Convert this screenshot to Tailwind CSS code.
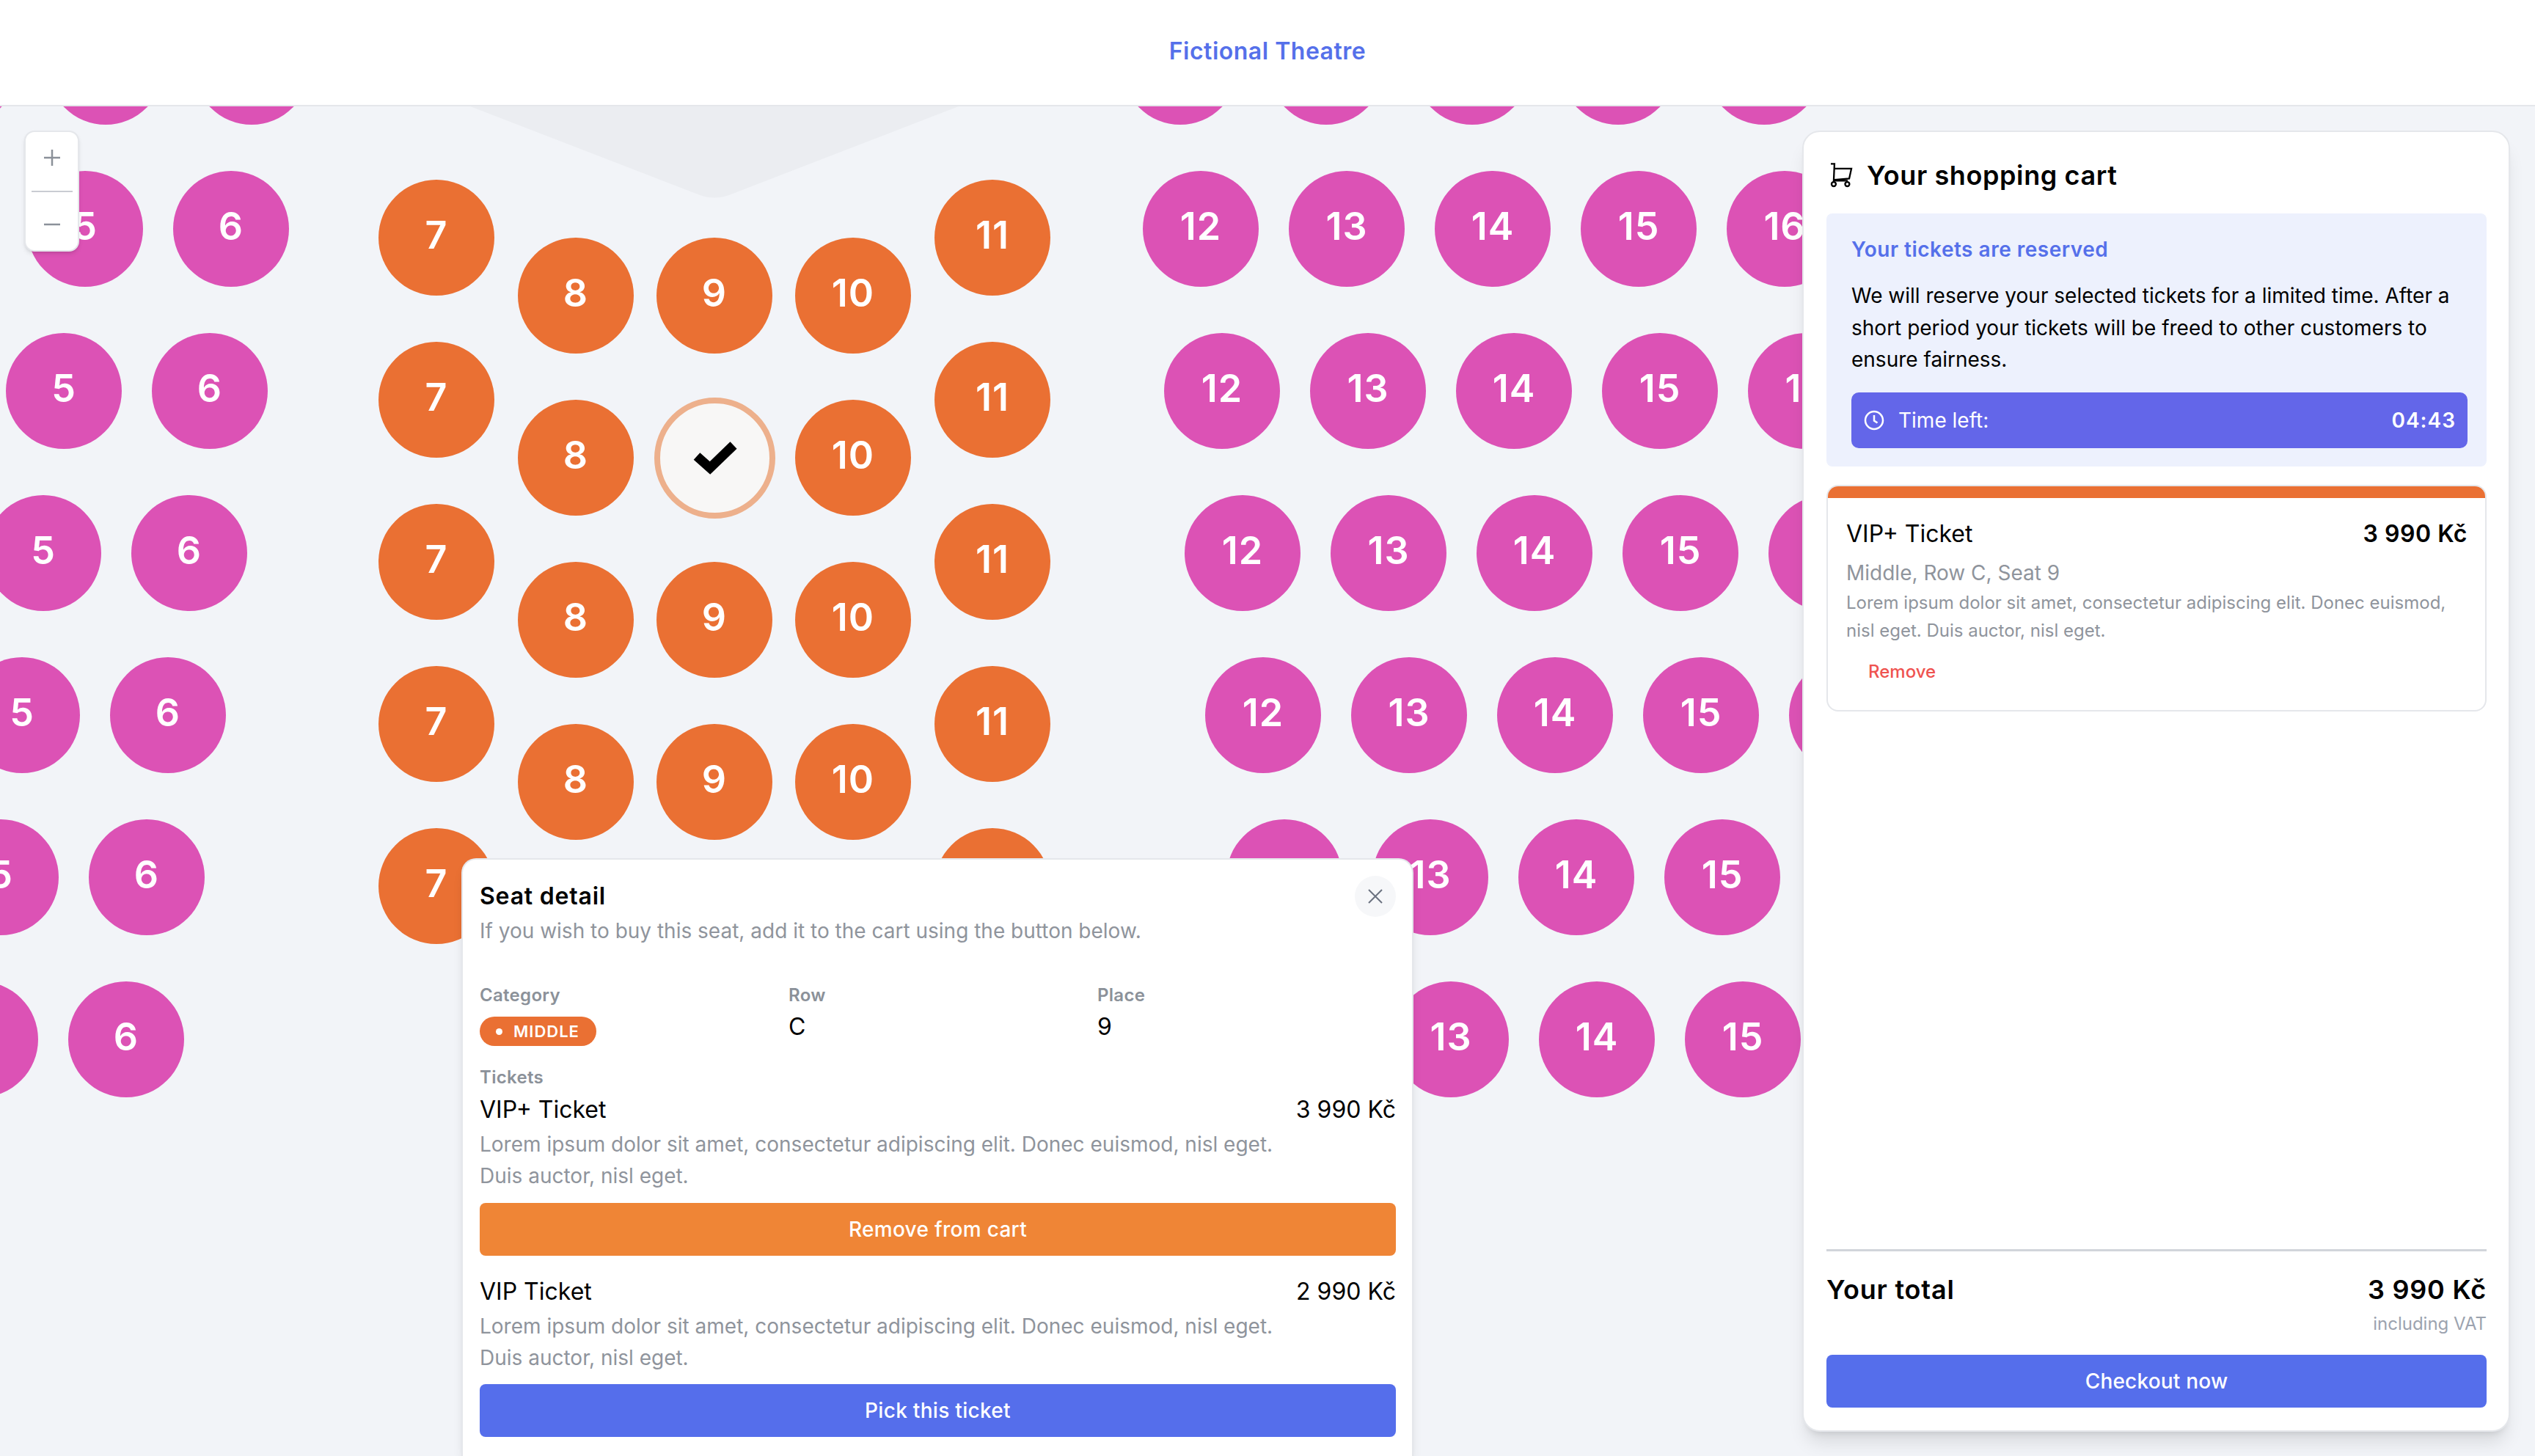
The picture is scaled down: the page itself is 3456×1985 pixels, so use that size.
<!DOCTYPE html>
<html lang="en">
  <head>
    <meta charset="UTF-8" />
    <meta name="viewport" content="width=device-width, initial-scale=1.0" />
    <script src="https://cdn.jsdelivr.net/npm/@tailwindcss/browser@4"></script>
    <title>Fictional Theatre</title>
  </head>

  <body class="bg-[#f2f4f8] h-screen w-screen overflow-hidden text-black [font-family:Inter,sans-serif]">
    <header class="relative z-20 flex h-[145px] items-center justify-center border-b-2 border-[#e5e7eb] bg-white pb-[4px]">
      <h1 class="text-[32px] font-semibold tracking-[0.5px] text-[#5570ea]">Fictional Theatre</h1>
    </header>

    <main class="relative h-[1840px] w-full overflow-hidden">
      <!-- hall map: seats are placed by script from their coordinates -->
      <div id="map" class="absolute inset-0">
        <svg class="absolute left-[641px] top-0" width="666" height="126" viewBox="0 0 666 126">
          <path d="M0 0H666L358 119Q333 130 308 119Z" fill="#ebedf1" />
        </svg>
      </div>

      <!-- zoom control -->
      <div class="absolute left-[33px] top-[33px] flex h-[165px] w-[75px] flex-col items-center rounded-[14px] border-2 border-[#e5e7eb] bg-white shadow-md">
        <div class="flex h-[81px] items-center justify-center pb-[10px]">
          <svg width="22" height="22" viewBox="0 0 22 22" fill="none" stroke="#8b9199" stroke-width="2.5"><path d="M11 0v22M0 11h22" /></svg>
        </div>
        <div class="h-[2px] w-[56px] bg-[#c9ccd2]"></div>
        <div class="flex h-[80px] items-center justify-center pt-[10px]">
          <svg width="22" height="22" viewBox="0 0 22 22" fill="none" stroke="#8b9199" stroke-width="2.5"><path d="M0 11h22" /></svg>
        </div>
      </div>

      <!-- seat detail popup -->
      <section class="absolute bottom-0 left-[629px] h-[815px] w-[1298px] rounded-t-[20px] border-2 border-b-0 border-[#e5e7eb] bg-white pl-[23px] pr-[22px] pt-[30px] shadow-lg">
        <div class="relative">
          <h2 class="text-[32px] leading-[40px] font-semibold tracking-[0.8px]">Seat detail</h2>
          <p class="mt-[7px] text-[28px] leading-[40px] text-[#8f949c]">If you wish to buy this seat, add it to the cart using the button below.</p>
          <button class="absolute -top-[8px] right-0 flex h-[56px] w-[56px] items-center justify-center rounded-full bg-[#f6f7f9]">
            <svg width="22" height="22" viewBox="0 0 22 22" fill="none" stroke="#6b7280" stroke-width="2"><path d="M2 2l18 18M20 2L2 20" /></svg>
          </button>
        </div>
        <div class="mt-[52px] grid grid-cols-[421px_421px_1fr]">
          <div>
            <p class="text-[24px] leading-[32px] font-semibold tracking-[0.3px] text-[#8b9199]">Category</p>
            <span class="mt-[13px] flex h-[40px] w-[159px] items-center gap-[15px] rounded-full bg-[#ea7033] pl-[22px] text-[22px] font-semibold tracking-[1px] text-white">
              <i class="h-[9px] w-[9px] rounded-full bg-white"></i>MIDDLE
            </span>
          </div>
          <div>
            <p class="text-[24px] leading-[32px] font-semibold tracking-[0.3px] text-[#8b9199]">Row</p>
            <p class="mt-[7px] text-[32px] leading-[40px]">C</p>
          </div>
          <div>
            <p class="text-[24px] leading-[32px] font-semibold tracking-[0.3px] text-[#8b9199]">Place</p>
            <p class="mt-[7px] text-[32px] leading-[40px]">9</p>
          </div>
        </div>
        <p class="mt-[27px] text-[24px] leading-[32px] font-semibold tracking-[0.3px] text-[#8b9199]">Tickets</p>
        <div class="mt-[8px] flex justify-between text-[32px] leading-[40px]"><span>VIP+ Ticket</span><span>3 990 Kč</span></div>
        <p class="mt-[6px] w-[1100px] text-[28px] leading-[43px] text-[#8f949c]">Lorem ipsum dolor sit amet, consectetur adipiscing elit. Donec euismod, nisl eget. Duis auctor, nisl eget.</p>
        <button class="mt-[15px] block h-[72px] w-full rounded-[8px] bg-[#ef8536] text-[28px] font-medium tracking-[0.3px] text-white">Remove from cart</button>
        <div class="mt-[29px] flex justify-between text-[32px] leading-[40px]"><span>VIP Ticket</span><span>2 990 Kč</span></div>
        <p class="mt-[6px] w-[1100px] text-[28px] leading-[43px] text-[#8f949c]">Lorem ipsum dolor sit amet, consectetur adipiscing elit. Donec euismod, nisl eget. Duis auctor, nisl eget.</p>
        <button class="mt-[14px] block h-[72px] w-full rounded-[8px] bg-[#556eeb] text-[28px] font-medium tracking-[0.3px] text-white">Pick this ticket</button>
      </section>

      <!-- cart -->
      <aside class="absolute left-[2457px] top-[33px] flex h-[1774px] w-[965px] flex-col rounded-[24px] border-2 border-[#e5e7eb] bg-white pl-[31px] pr-[30px] pb-[31px] shadow-xl">
        <div class="flex h-[111px] items-center gap-[18px] pl-[4px] pt-[6px]">
          <svg width="33" height="37" viewBox="160 150 100 112" fill="none" stroke="#000" stroke-width="7">
            <path d="M166 160h15l-3 70h58M181 179l70 1-9 41-61 5" />
            <circle cx="178" cy="244" r="9" />
            <circle cx="234" cy="244" r="9" />
          </svg>
          <h2 class="text-[36px] font-semibold tracking-[0.6px]">Your shopping cart</h2>
        </div>
        <div class="rounded-[8px] bg-[#edf1fd] pl-[34px] pr-[26px] pt-[31px] pb-[25px]">
          <p class="text-[28px] leading-[36px] font-semibold tracking-[0.5px] text-[#5570ea]">Your tickets are reserved</p>
          <p class="mt-[24px] w-[830px] text-[28px] leading-[43.5px]">We will reserve your selected tickets for a limited time. After a short period your tickets will be freed to other customers to ensure fairness.</p>
          <div class="mt-[22px] flex h-[76px] items-center rounded-[10px] bg-[#6366e9] pl-[17px] pr-[16px] text-[28px] text-white">
            <svg width="28" height="28" viewBox="0 0 28 28" fill="none" stroke="#fff" stroke-width="2.5" class="mr-[19px]">
              <circle cx="14" cy="14" r="12" />
              <path d="M14 7v7.5l4.5 3" />
            </svg>
            <span>Time left:</span>
            <span class="ml-auto font-semibold tracking-[1px]">04:43</span>
          </div>
        </div>
        <article class="mt-[25px] h-[309px] overflow-hidden rounded-[16px] border-2 border-[#e5e7eb]">
          <div class="h-[16px] bg-[#ea7033]"></div>
          <div class="pl-[25px] pr-[24px] pt-[29px]">
            <div class="flex justify-between text-[32px] leading-[40px]"><span>VIP+ Ticket</span><span class="font-semibold tracking-[0.5px]">3 990 Kč</span></div>
            <p class="mt-[15px] text-[28px] leading-[36px] text-[#8f949c]">Middle, Row C, Seat 9</p>
            <p class="mt-[4px] text-[24px] leading-[38px] text-[#8f949c]">Lorem ipsum dolor sit amet, consectetur adipiscing elit. Donec euismod, nisl eget. Duis auctor, nisl eget.</p>
            <p class="mt-[19px] pl-[30px] text-[24px] leading-[36px] font-medium text-[#ef5350]">Remove</p>
          </div>
        </article>
        <div class="mt-auto border-t-[3px] border-[#d1d5db] pt-[30px]">
          <div class="flex justify-between text-[36px] leading-[44px] font-semibold tracking-[0.8px]"><span>Your total</span><span>3 990 Kč</span></div>
          <p class="mt-[9px] text-right text-[24px] leading-[32px] text-[#9ca3af]">including VAT</p>
          <button class="mt-[26px] block h-[72px] w-full rounded-[8px] bg-[#556eeb] text-[28px] font-medium tracking-[0.2px] text-white">Checkout now</button>
        </div>
      </aside>
    </main>

    <script>
      const map = document.getElementById("map");
      const topOffset = 145;

      // y of each row, and x of the first seat of that row
      const rowY = [91, 312, 533, 754, 975, 1196, 1417];
      const leftBlock = [-55, -83, -112, -140, -169, -198, -226];
      const rightBlock = [1609, 1637, 1666, 1694, 1722, 1751, 1779];

      const addSeat = (x, y, label, cls) => {
        const seat = document.createElement("div");
        seat.className = "absolute flex h-[158px] w-[158px] items-center justify-center rounded-full pb-[7px] text-[52px] font-semibold tracking-[1px] text-white " + cls;
        seat.style.left = x - 79 + "px";
        seat.style.top = y - topOffset - 79 + "px";
        seat.textContent = label;
        map.appendChild(seat);
      };

      rowY.forEach((y, i) => {
        [4, 5, 6].forEach((n, k) => addSeat(leftBlock[i] + k * 199, y, n, "bg-[#dc52b5]"));
        [12, 13, 14, 15, 16].forEach((n, k) => addSeat(rightBlock[i] + k * 199, y, n, "bg-[#dc52b5]"));
      });

      // middle block
      [324, 545, 766, 987, 1208].forEach((y) => {
        addSeat(595, y, 7, "bg-[#ea7033]");
        addSeat(1353, y, 11, "bg-[#ea7033]");
      });
      [403, 624, 845, 1066, 1287].forEach((y) => {
        addSeat(785, y, 8, "bg-[#ea7033]");
        if (y !== 624) addSeat(974, y, 9, "bg-[#ea7033]");
        addSeat(1163, y, 10, "bg-[#ea7033]");
      });

      // selected seat
      const selected = document.createElement("div");
      selected.className = "absolute flex h-[165px] w-[165px] items-center justify-center rounded-full border-[8px] border-[#edb08c] bg-[#f8f7f6]";
      selected.style.left = 974 - 82 + "px";
      selected.style.top = 624 - topOffset - 82 + "px";
      selected.innerHTML = '<svg width="62" height="48" viewBox="0 0 62 48" fill="none" stroke="#000" stroke-width="13" stroke-linejoin="miter"><path d="M6 21l18 16L56 6" /></svg>';
      map.appendChild(selected);
    </script>
  </body>
</html>
